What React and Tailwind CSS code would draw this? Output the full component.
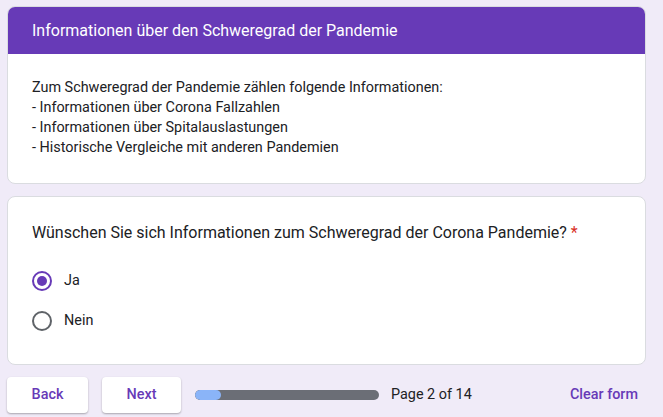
export default function App() {
  return (
    <div
      className="min-h-[417px] w-[663px] bg-[#f0ebf8] pl-[7px] pr-[17px] pt-[6px]"
      style={{ fontFamily: 'Roboto, "Noto Sans", sans-serif' }}
    >
      {/* Section header card */}
      <div className="overflow-hidden rounded-lg border border-[#dadce0] bg-white">
        <div className="flex h-[47px] items-center bg-[#673ab7] px-6 text-[16px] text-white">
          Informationen über den Schweregrad der Pandemie
        </div>
        <div className="px-6 pb-[25px] pt-[24px] text-[14.4px] leading-5 text-[#202124]">
          <div>Zum Schweregrad der Pandemie zählen folgende Informationen:</div>
          <div>- Informationen über Corona Fallzahlen</div>
          <div>- Informationen über Spitalauslastungen</div>
          <div>- Historische Vergleiche mit anderen Pandemien</div>
        </div>
      </div>

      {/* Question card */}
      <div className="mt-3 h-[169px] rounded-lg border border-[#dadce0] bg-white px-6 pt-[24px]">
        <div className="text-[16px] leading-6 text-[#202124]">
          Wünschen Sie sich Informationen zum Schweregrad der Corona Pandemie?{' '}
          <span className="text-[#d93025]">*</span>
        </div>
        <div className="mt-[26px] flex flex-col gap-[20px]">
          <label className="flex h-5 items-center gap-3 text-[14.4px] text-[#202124]">
            <span className="flex h-5 w-5 items-center justify-center rounded-full border-2 border-[#673ab7]">
              <span className="h-[10px] w-[10px] rounded-full bg-[#673ab7]" />
            </span>
            Ja
          </label>
          <label className="flex h-5 items-center gap-3 text-[14.4px] text-[#202124]">
            <span className="h-5 w-5 rounded-full border-2 border-[#5f6368]" />
            Nein
          </label>
        </div>
      </div>

      {/* Footer */}
      <div className="mt-3 flex h-9 items-center text-[14.4px]">
        <button className="h-9 w-[81px] rounded bg-white font-medium text-[#673ab7] shadow-[0_1px_2px_rgba(0,0,0,0.3)]">
          Back
        </button>
        <button className="ml-[14px] h-9 w-[79px] rounded bg-white font-medium text-[#673ab7] shadow-[0_1px_2px_rgba(0,0,0,0.3)]">
          Next
        </button>
        <div className="ml-[14px] h-[10px] w-[184px] overflow-hidden rounded-full bg-[#6b6e76]">
          <div className="h-full w-[26px] rounded-full bg-[#8ab4f8]" />
        </div>
        <span className="ml-3 text-[#202124]">Page 2 of 14</span>
        <button className="ml-auto px-2 font-medium text-[#673ab7]">Clear form</button>
      </div>
    </div>
  )
}
